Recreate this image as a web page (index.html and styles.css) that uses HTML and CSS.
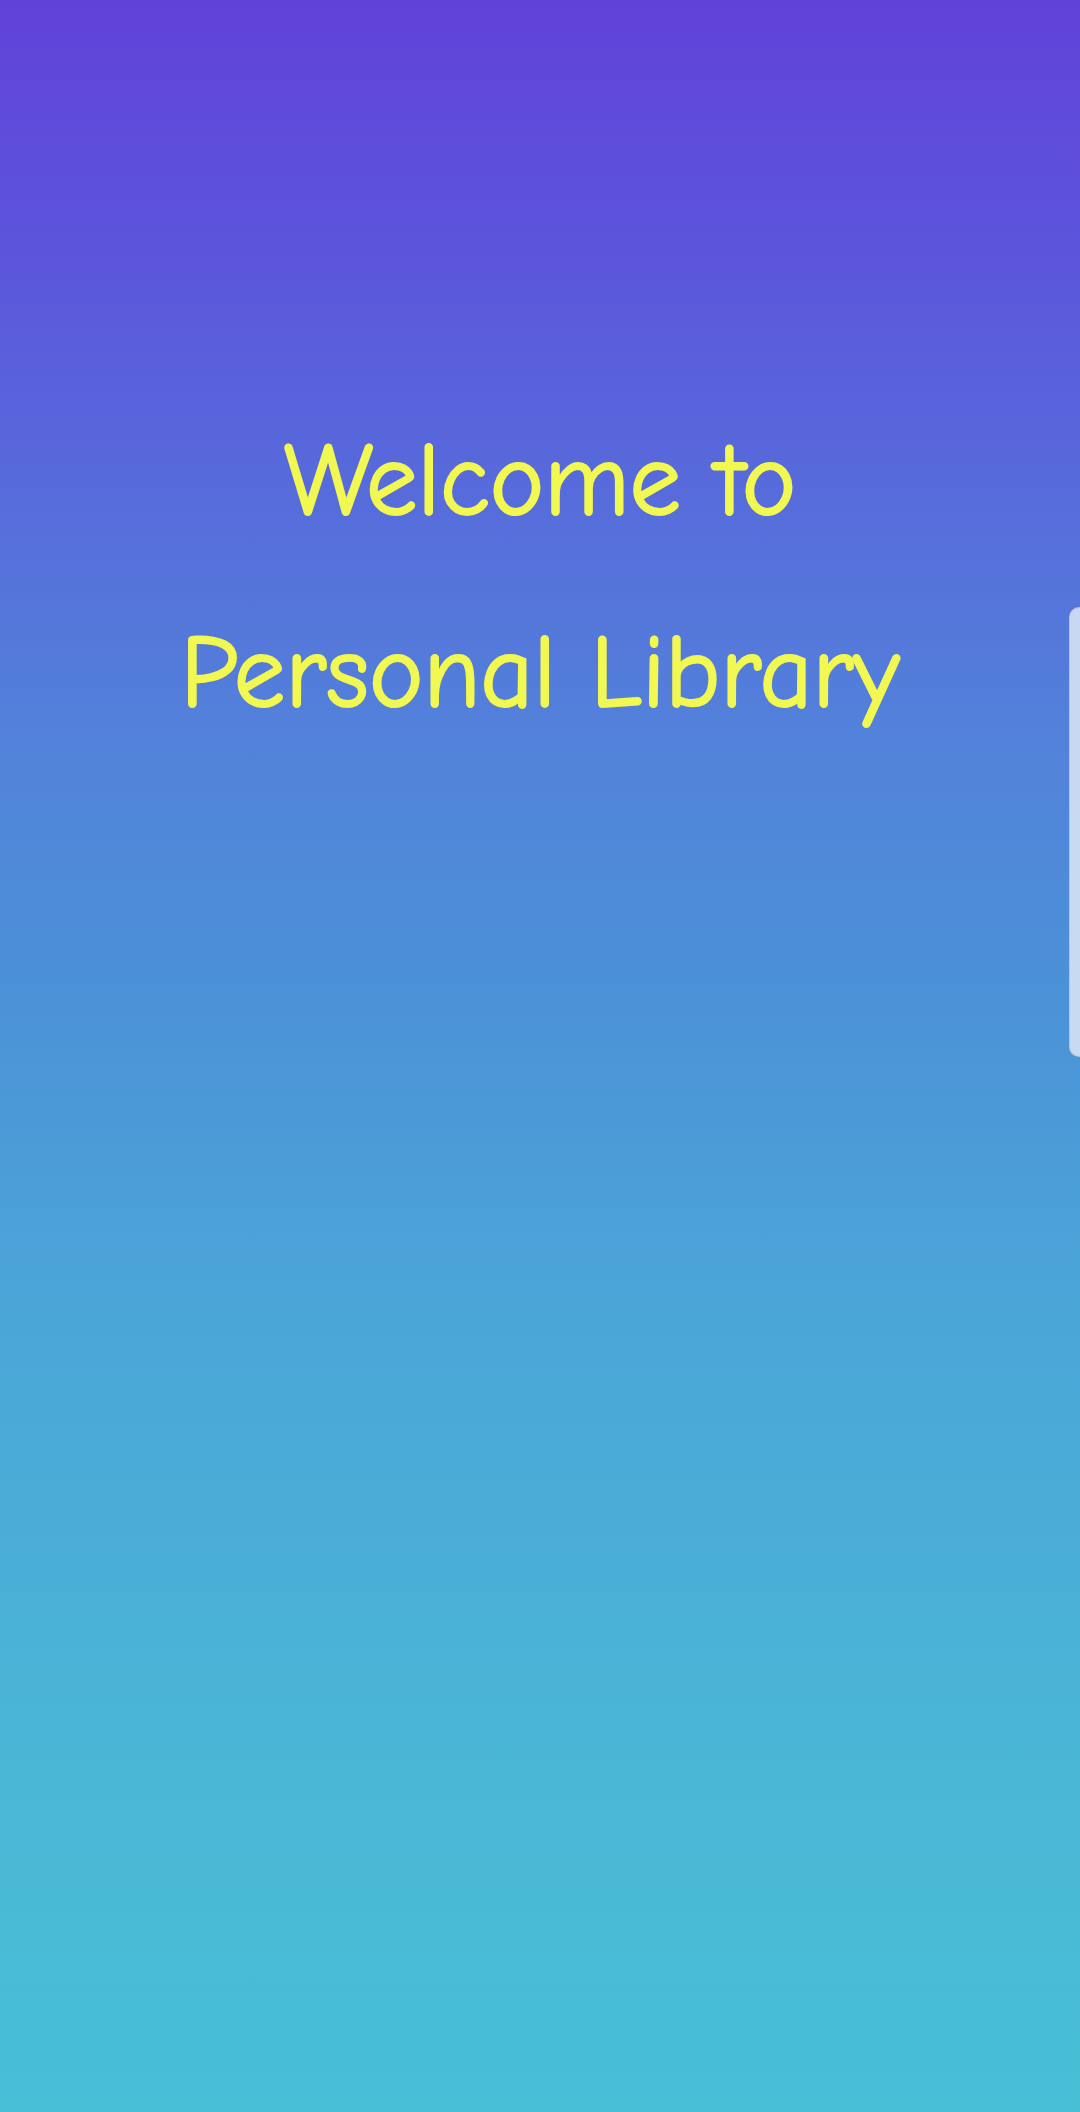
FILE: index.html
```html
<!DOCTYPE html>
<html lang="en">
<head>
<meta charset="utf-8">
<title>Personal Library</title>
<link rel="stylesheet" href="styles.css">
</head>
<body>
<main class="page">
  <h1 class="welcome">
    <span class="line">Welcome to</span>
    <span class="line">Personal Library</span>
  </h1>
  <aside class="panel"></aside>
</main>
</body>
</html>
```
FILE: styles.css
```css
html, body {
  margin: 0;
  padding: 0;
}
body {
  width: 1080px;
  height: 2112px;
  overflow: hidden;
}
.page {
  position: relative;
  width: 1080px;
  height: 2112px;
  overflow: hidden;
  background: linear-gradient(180deg,
    #6142d9 0px,
    #5c55dc 250px,
    #5283da 750px,
    #4b92d7 1000px,
    #4ba3d8 1250px,
    #4ab6d6 1750px,
    #48c0d6 2112px);
  display: flex;
  flex-direction: column;
  align-items: center;
  padding-top: 411px;
  box-sizing: border-box;
}
.welcome {
  margin: 0;
  font-family: "Comic Sans MS", "Comic Neue", cursive;
  font-weight: normal;
  font-size: 103px;
  color: #f2f852;
  -webkit-text-stroke: 2px #f2f852;
  text-align: center;
  display: flex;
  flex-direction: column;
  align-items: center;
  gap: 52px;
  line-height: 140px;
}
.line {
  display: block;
  white-space: nowrap;
}
.line-2 {
  margin-right: 16px;
}
.panel {
  position: absolute;
  left: 1069px;
  top: 607px;
  width: 400px;
  height: 450px;
  border-radius: 10px;
  background: rgba(210, 224, 244, 0.92);
  border: 1px solid rgba(180, 190, 205, 0.8);
  box-sizing: border-box;
}
```
